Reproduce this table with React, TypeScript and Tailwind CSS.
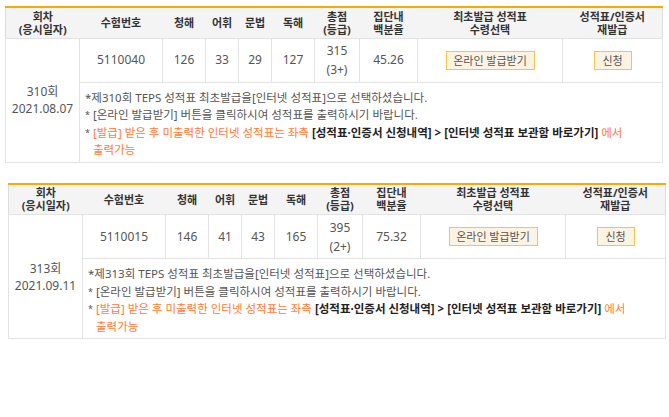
import React from "react";

type Row = {
  round: string;
  date: string;
  num: string;
  l: number;
  v: number;
  g: number;
  r: number;
  total: string;
  grade: string;
  pct: string;
};

const rows: Row[] = [
  { round: "310회", date: "2021.08.07", num: "5110040", l: 126, v: 33, g: 29, r: 127, total: "315", grade: "(3+)", pct: "45.26" },
  { round: "313회", date: "2021.09.11", num: "5110015", l: 146, v: 41, g: 43, r: 165, total: "395", grade: "(2+)", pct: "75.32" },
];

const font = { fontFamily: '"Noto Sans", "Noto Sans CJK KR", sans-serif' };

function ScoreTable({ row, cls }: { row: Row; cls: string }) {
  const th = "font-bold text-[#333] text-[11px] leading-[13px] text-center align-middle px-0 py-0";
  const td = "border border-[#e3e3e3] text-center align-middle text-[12px] text-[#555] p-0";
  return (
    <table
      className={`table-fixed border-collapse w-[657px] border-t-2 border-t-[#f5ac00] border-x border-b border-[#dcdcdc] ${cls}`}
      style={font}
    >
      <colgroup>
        <col className="w-[74px]" />
        <col className="w-[83px]" />
        <col className="w-[43px]" />
        <col className="w-[33px]" />
        <col className="w-[33px]" />
        <col className="w-[43px]" />
        <col className="w-[45px]" />
        <col className="w-[58px]" />
        <col className="w-[145px]" />
        <col className="w-[100px]" />
      </colgroup>
      <thead>
        <tr className="h-[31px] bg-[#f4f4f4]">
          <th className={th}>회차<br />(응시일자)</th>
          <th className={th}>수험번호</th>
          <th className={th}>청해</th>
          <th className={th}>어휘</th>
          <th className={th}>문법</th>
          <th className={th}>독해</th>
          <th className={th}>총점<br />(등급)</th>
          <th className={th}>집단내<br />백분율</th>
          <th className={th}>최초발급 성적표<br />수령선택</th>
          <th className={th}>성적표/인증서<br />재발급</th>
        </tr>
      </thead>
      <tbody>
        <tr className="h-[44px]">
          <td rowSpan={2} className={`${td} leading-[17px]`}>
            {row.round}
            <br />
            {row.date}
          </td>
          <td className={td}>{row.num}</td>
          <td className={td}>{row.l}</td>
          <td className={td}>{row.v}</td>
          <td className={td}>{row.g}</td>
          <td className={td}>{row.r}</td>
          <td className={`${td} leading-[19px]`}>
            {row.total}
            <br />
            {row.grade}
          </td>
          <td className={td}>{row.pct}</td>
          <td className={td}>
            <button className="h-[19px] w-[89px] bg-[#fdf3e3] border-[1.5px] border-[#f5c44c] text-[11px] text-[#555] leading-none">
              온라인 발급받기
            </button>
          </td>
          <td className={td}>
            <button className="h-[19px] w-[38px] bg-[#fdf3e3] border-[1.5px] border-[#f5c44c] text-[11px] text-[#555] leading-none">
              신청
            </button>
          </td>
        </tr>
        <tr className="h-[80px]">
          <td colSpan={9} className="border border-[#e3e3e3] align-top pl-[5px] pt-[6px] text-[11.5px] leading-[17.5px] text-[#555]">
            <div>*제{row.round} TEPS 성적표 최초발급을[인터넷 성적표]으로 선택하셨습니다.</div>
            <div className="flex">
              <span className="w-[8px] shrink-0 text-[9px]">*</span>
              <span>[온라인 발급받기] 버튼을 클릭하시여 성적표를 출력하시기 바랍니다.</span>
            </div>
            <div className="flex">
              <span className="w-[8px] shrink-0 text-[9px]">*</span>
              <span className="text-[#ff7b33]">
                [발급] 받은 후 미출력한 인터넷 성적표는 좌측{" "}
                <b className="text-[#222]">[성적표·인증서 신청내역] &gt; [인터넷 성적표 보관함 바로가기]</b> 에서
                <br />
                출력가능
              </span>
            </div>
          </td>
        </tr>
      </tbody>
    </table>
  );
}

export default function App() {
  return (
    <div className="w-[669px] h-[417px] bg-white overflow-hidden pt-[6px]">
      <ScoreTable row={rows[0]} cls="ml-[5px]" />
      <ScoreTable row={rows[1]} cls="ml-[8px] mt-[20px]" />
    </div>
  );
}
